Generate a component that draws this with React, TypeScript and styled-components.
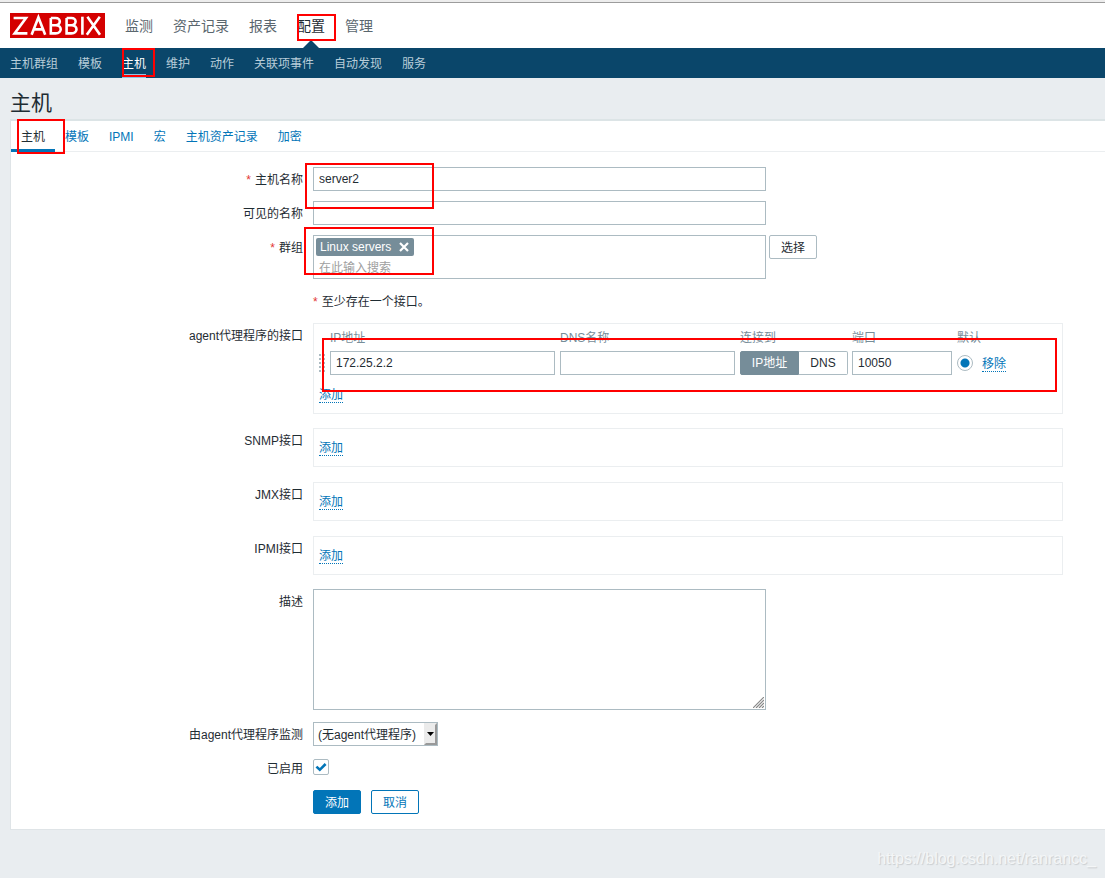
import React from "react";
import styled, { createGlobalStyle, css } from "styled-components";

const FONT = '"Liberation Sans", "Noto Sans CJK SC", sans-serif';

const Global = createGlobalStyle`
  *, *::before, *::after { box-sizing: border-box; }
  body {
    margin: 0;
    background: #e9edf0;
    color: #1f2c33;
    font-family: ${FONT};
    font-size: 12px;
    line-height: 16px;
  }
  input, button, select, textarea { font: inherit; color: inherit; margin: 0; }
`;

const Page = styled.div`
  position: relative;
  min-height: 100vh;
`;

const WindowEdge = styled.div`
  height: 3px;
  background: #ededed;
  border-bottom: 1px solid #9c9c9c;
`;

const TopBar = styled.header`
  display: flex;
  align-items: center;
  gap: 20px;
  height: 45px;
  padding: 0 10px;
  background: #fff;
`;

const Logo = styled.a`
  display: block;
  width: 95px;
  height: 25px;
  background: #d40000;
`;

const MainNav = styled.nav`
  display: flex;
  align-self: stretch;
  gap: 20px;
`;

const MainLink = styled.a<{ $active?: boolean }>`
  position: relative;
  display: flex;
  align-items: center;
  color: ${(p) => (p.$active ? "#1f2c33" : "#5a666e")};
  font-size: 14px;
  text-decoration: none;
  ${(p) =>
    p.$active &&
    css`
      &::after {
        content: "";
        position: absolute;
        left: 50%;
        bottom: 0;
        margin-left: -8px;
        border: 8px solid transparent;
        border-top: 0;
        border-bottom-color: #0a466a;
      }
    `}
`;

const SubNav = styled.nav`
  display: flex;
  gap: 20px;
  height: 30px;
  padding: 0 10px;
  background: #0a466a;
`;

const SubLink = styled.a<{ $active?: boolean }>`
  padding-top: 8px;
  border-bottom: 4px solid ${(p) => (p.$active ? "#8cc4e6" : "transparent")};
  color: ${(p) => (p.$active ? "#fff" : "#b8cdd9")};
  text-decoration: none;
`;

const Title = styled.h1`
  margin: 0;
  padding: 9px 10px 0;
  font-size: 21px;
  font-weight: 400;
  line-height: 32px;
`;

const Panel = styled.main`
  margin-left: 10px;
  background: #fff;
  border: 1px solid #dfe4e7;
  border-top: 2px solid #dce4e6;
  border-right: 0;
`;

const Tabs = styled.nav`
  display: flex;
  height: 31px;
  border-bottom: 1px solid #ebeef0;
`;

const Tab = styled.a<{ $active?: boolean }>`
  height: 31px;
  padding: 0 10px;
  border-bottom: 3px solid ${(p) => (p.$active ? "#0275b8" : "transparent")};
  color: ${(p) => (p.$active ? "#1f2c33" : "#0275b8")};
  line-height: 32px;
  text-decoration: none;
`;

const Form = styled.form`
  display: flex;
  flex-direction: column;
  gap: 10px;
  padding: 15px 0;
`;

const Row = styled.div<{ $after?: number }>`
  display: grid;
  grid-template-columns: 292px minmax(0, 1fr);
  column-gap: 10px;
  height: max-content;
  margin-bottom: ${(p) => p.$after ?? 0}px;
`;

const Label = styled.label`
  height: 24px;
  line-height: 26px;
  text-align: right;
`;

const Star = styled.span`
  margin-right: 4px;
  color: #e33734;
`;

const Field = styled.div<{ $gap?: number }>`
  grid-column: 2;
  display: flex;
  align-items: flex-start;
  gap: ${(p) => p.$gap ?? 0}px;
`;

const Note = styled.p`
  height: 24px;
  margin: 0;
  line-height: 26px;
`;

const inputBox = css`
  border: 1px solid #acbbc2;
  border-radius: 0;
  background: #fff;
  outline: 0;
`;

const TextInput = styled.input<{ $width: number }>`
  ${inputBox}
  display: block;
  width: ${(p) => p.$width}px;
  height: 24px;
  padding: 0 5px;
`;

const MultiSelect = styled.div`
  ${inputBox}
  width: 453px;
  height: 44px;
  padding: 2px;
`;

const Chip = styled.span`
  display: flex;
  align-items: center;
  gap: 8px;
  width: max-content;
  height: 18px;
  padding: 0 5px 0 4px;
  border-radius: 2px;
  background: #768d99;
  color: #fff;
`;

const ChipRemove = styled.button`
  display: flex;
  padding: 0;
  border: 0;
  background: none;
`;

const SearchInput = styled.input`
  display: block;
  width: 100%;
  height: 22px;
  padding: 2px 3px 0;
  border: 0;
  outline: 0;
  background: none;
  &::placeholder { color: #a0a0a0; opacity: 1; }
`;

const Button = styled.button<{ $kind: "grey" | "solid" | "line" }>`
  width: 48px;
  height: 24px;
  padding: 2px 0 0;
  border: 1px solid ${(p) => (p.$kind === "grey" ? "#acbbc2" : "#0275b8")};
  border-radius: 2px;
  background: ${(p) => (p.$kind === "solid" ? "#0275b8" : "#fff")};
  color: ${(p) => (p.$kind === "solid" ? "#fff" : p.$kind === "line" ? "#0275b8" : "#1f2c33")};
`;

const Box = styled.div`
  width: 750px;
  padding: 0 5px;
  border: 1px solid #ebeef0;
`;

const BoxFooter = styled.div<{ $height: number }>`
  display: flex;
  align-items: center;
  height: ${(p) => p.$height}px;
`;

const Action = styled.a`
  display: block;
  width: max-content;
  height: 17px;
  border-bottom: 1px dotted #0275b8;
  color: #0275b8;
  line-height: 18px;
  text-decoration: none;
`;

const Interfaces = styled.table`
  width: 100%;
  table-layout: fixed;
  border-collapse: collapse;
  th {
    height: 27px;
    padding: 0;
    color: #768d99;
    font-weight: 400;
    text-align: left;
    white-space: nowrap;
  }
  td {
    height: 24px;
    padding: 0;
    vertical-align: middle;
  }
`;

const Grip = styled.svg`
  display: block;
`;

const Segments = styled.div`
  display: flex;
`;

const Segment = styled.button<{ $on?: boolean }>`
  width: ${(p) => (p.$on ? 59 : 49)}px;
  height: 24px;
  padding: 0;
  border: 1px solid ${(p) => (p.$on ? "#768d99" : "#acbbc2")};
  border-left-width: ${(p) => (p.$on ? 1 : 0)}px;
  border-radius: ${(p) => (p.$on ? "2px 0 0 2px" : "0 2px 2px 0")};
  background: ${(p) => (p.$on ? "#768d99" : "#fff")};
  color: ${(p) => (p.$on ? "#fff" : "#1f2c33")};
`;

const Radio = styled.input`
  appearance: none;
  display: block;
  width: 16px;
  height: 16px;
  border: 1px solid #acbbc2;
  border-radius: 50%;
  background: #fff;
  &:checked { background: radial-gradient(circle, #0275b8 4px, #fff 5px); }
`;

const TextArea = styled.textarea`
  ${inputBox}
  display: block;
  width: 453px;
  height: 121px;
  padding: 4px 5px;
  resize: none;
`;

const Overlap = styled.div`
  position: relative;
`;

const ResizeMark = styled.svg`
  position: absolute;
  right: 2px;
  bottom: 2px;
  pointer-events: none;
`;

const Select = styled.select`
  ${inputBox}
  appearance: none;
  display: block;
  width: 125px;
  height: 24px;
  padding: 2px 14px 0 4px;
`;

const SelectArrow = styled.svg`
  position: absolute;
  top: 1px;
  right: 1px;
  pointer-events: none;
`;

const CheckWrap = styled.div`
  position: relative;
  margin: 3px 0 5px;
`;

const Check = styled.input`
  appearance: none;
  display: block;
  width: 16px;
  height: 16px;
  border: 1px solid #acbbc2;
  border-radius: 2px;
  background: #fff;
`;

const CheckMark = styled.svg`
  position: absolute;
  top: 0;
  left: 0;
  pointer-events: none;
  visibility: hidden;
  input:checked + & { visibility: visible; }
`;

const Marker = styled.div<{ $x: number; $y: number; $w: number; $h: number }>`
  position: absolute;
  left: ${(p) => p.$x}px;
  top: ${(p) => p.$y}px;
  width: ${(p) => p.$w}px;
  height: ${(p) => p.$h}px;
  border: 2px solid #f00;
  pointer-events: none;
`;

const Watermark = styled.div`
  position: absolute;
  right: 9px;
  bottom: 9px;
  color: #f4f6f7;
  font-size: 16px;
  line-height: 20px;
  text-shadow: 1px 1px 1px #c8cccf;
`;

const mainItems = ["监测", "资产记录", "报表", "配置", "管理"];
const subItems = ["主机群组", "模板", "主机", "维护", "动作", "关联项事件", "自动发现", "服务"];
const tabItems = ["主机", "模板", "IPMI", "宏", "主机资产记录", "加密"];

const markers = [
  [297, 14, 39, 27],
  [122, 48, 33, 29],
  [17, 119, 48, 35],
  [305, 163, 129, 46],
  [304, 227, 130, 48],
  [322, 338, 735, 54],
];

const emptyInterfaces = [
  { name: "SNMP接口", after: 5 },
  { name: "JMX接口", after: 5 },
  { name: "IPMI接口", after: 4 },
];

export default function App() {
  return (
    <Page>
      <Global />
      <WindowEdge />
      <TopBar>
        <Logo href="#" aria-label="ZABBIX">
          <svg width="95" height="25" viewBox="0 0 95 25" fill="none" stroke="#fff" strokeWidth="2.6">
            <path d="M3.6 5H16L4.6 20.4H17.4" />
            <path d="M21.6 21.7L28.4 4.4L35.2 21.7M24 16.4H32.8" />
            <path d="M40.8 5H45.6C51.2 5 51.2 12.2 45.6 12.2H40.8M45.6 12.2C52.4 12.2 52.4 20.4 45.6 20.4H40.8V5" />
            <path d="M56.6 5H61.4C67 5 67 12.2 61.4 12.2H56.6M61.4 12.2C68.2 12.2 68.2 20.4 61.4 20.4H56.6V5" />
            <path d="M72.4 3.7V21.7" />
            <path d="M77.4 3.7L90 21.7M89.8 3.7L76.8 21.7" />
          </svg>
        </Logo>
        <MainNav>
          {mainItems.map((t) => (
            <MainLink key={t} href="#" $active={t === "配置"}>{t}</MainLink>
          ))}
        </MainNav>
      </TopBar>
      <SubNav>
        {subItems.map((t) => (
          <SubLink key={t} href="#" $active={t === "主机"}>{t}</SubLink>
        ))}
      </SubNav>
      <Title>主机</Title>
      <Panel>
        <Tabs>
          {tabItems.map((t) => (
            <Tab key={t} href="#" $active={t === "主机"}>{t}</Tab>
          ))}
        </Tabs>
        <Form onSubmit={(e) => e.preventDefault()}>
          <Row>
            <Label htmlFor="host"><Star>*</Star>主机名称</Label>
            <Field><TextInput id="host" $width={453} defaultValue="server2" /></Field>
          </Row>
          <Row>
            <Label htmlFor="visible">可见的名称</Label>
            <Field><TextInput id="visible" $width={453} /></Field>
          </Row>
          <Row>
            <Label htmlFor="groups"><Star>*</Star>群组</Label>
            <Field $gap={3}>
              <MultiSelect>
                <Chip>
                  Linux servers
                  <ChipRemove type="button" aria-label="移除 Linux servers">
                    <svg width="10" height="10" viewBox="0 0 10 10" stroke="#fff" strokeWidth="2.2">
                      <path d="M1 1L9 9M9 1L1 9" />
                    </svg>
                  </ChipRemove>
                </Chip>
                <SearchInput id="groups" placeholder="在此输入搜索" />
              </MultiSelect>
              <Button type="button" $kind="grey">选择</Button>
            </Field>
          </Row>
          <Row>
            <Field><Note><Star>*</Star>至少存在一个接口。</Note></Field>
          </Row>
          <Row $after={4}>
            <Label as="span">agent代理程序的接口</Label>
            <Field>
              <Box>
                <Interfaces>
                  <colgroup>
                    <col style={{ width: 11 }} />
                    <col style={{ width: 230 }} />
                    <col style={{ width: 180 }} />
                    <col style={{ width: 112 }} />
                    <col style={{ width: 105 }} />
                    <col style={{ width: 25 }} />
                    <col />
                  </colgroup>
                  <thead>
                    <tr>
                      <th />
                      <th>IP地址</th>
                      <th>DNS名称</th>
                      <th>连接到</th>
                      <th>端口</th>
                      <th>默认</th>
                      <th />
                    </tr>
                  </thead>
                  <tbody>
                    <tr>
                      <td>
                        <Grip width="6" height="18" viewBox="0 0 6 18" fill="#acbbc2">
                          {[0, 4, 8, 12, 16].map((y) => (
                            <React.Fragment key={y}>
                              <rect x="0" y={y} width="2" height="2" />
                              <rect x="4" y={y} width="2" height="2" />
                            </React.Fragment>
                          ))}
                        </Grip>
                      </td>
                      <td><TextInput aria-label="IP地址" $width={225} defaultValue="172.25.2.2" /></td>
                      <td><TextInput aria-label="DNS名称" $width={175} /></td>
                      <td>
                        <Segments>
                          <Segment type="button" $on>IP地址</Segment>
                          <Segment type="button">DNS</Segment>
                        </Segments>
                      </td>
                      <td><TextInput aria-label="端口" $width={100} defaultValue="10050" /></td>
                      <td><Radio type="radio" name="default" aria-label="默认" defaultChecked /></td>
                      <td><Action href="#">移除</Action></td>
                    </tr>
                  </tbody>
                </Interfaces>
                <BoxFooter $height={38}><Action href="#">添加</Action></BoxFooter>
              </Box>
            </Field>
          </Row>
          {emptyInterfaces.map((i) => (
            <Row key={i.name} $after={i.after}>
              <Label as="span">{i.name}</Label>
              <Field>
                <Box><BoxFooter $height={37}><Action href="#">添加</Action></BoxFooter></Box>
              </Field>
            </Row>
          ))}
          <Row $after={2}>
            <Label htmlFor="description">描述</Label>
            <Field>
              <Overlap>
                <TextArea id="description" />
                <ResizeMark width="11" height="11" viewBox="0 0 11 11" stroke="#888" strokeWidth="1.2">
                  <path d="M0 11L11 0M3 11L11 3M6 11L11 6M9 11L11 9" />
                </ResizeMark>
              </Overlap>
            </Field>
          </Row>
          <Row>
            <Label htmlFor="proxy">由agent代理程序监测</Label>
            <Field>
              <Overlap>
                <Select id="proxy"><option>(无agent代理程序)</option></Select>
                <SelectArrow width="13" height="22" viewBox="0 0 13 22">
                  <rect width="13" height="22" fill="#ebebeb" />
                  <path d="M13 0V22H0L2 20H11V2Z" fill="#999" />
                  <path d="M3 9H10L6.5 13Z" fill="#000" />
                </SelectArrow>
              </Overlap>
            </Field>
          </Row>
          <Row>
            <Label htmlFor="enabled">已启用</Label>
            <Field>
              <CheckWrap>
                <Check id="enabled" type="checkbox" defaultChecked />
                <CheckMark width="16" height="16" viewBox="0 0 16 16" fill="none" stroke="#0275b8" strokeWidth="2.6">
                  <path d="M3.4 7.6L6.8 10.8L12.6 5" />
                </CheckMark>
              </CheckWrap>
            </Field>
          </Row>
          <Row>
            <Field $gap={10}>
              <Button type="submit" $kind="solid">添加</Button>
              <Button type="button" $kind="line">取消</Button>
            </Field>
          </Row>
        </Form>
      </Panel>
      {markers.map(([x, y, w, h]) => (
        <Marker key={`${x}-${y}`} $x={x} $y={y} $w={w} $h={h} />
      ))}
      <Watermark>https://blog.csdn.net/ranrancc_</Watermark>
    </Page>
  );
}
